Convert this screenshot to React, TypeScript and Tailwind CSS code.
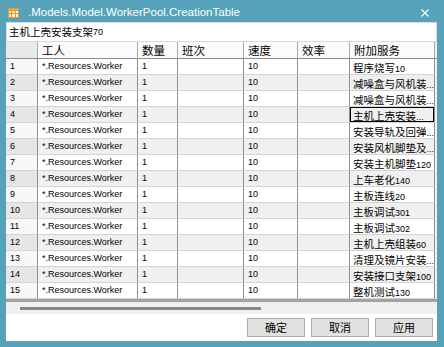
import React from "react";

const rows: [string, string][] = [
  ["1", "程序烧写10"],
  ["2", "减噪盒与风机装..."],
  ["3", "减噪盒与风机装..."],
  ["4", "主机上壳安装..."],
  ["5", "安装导轨及回弹..."],
  ["6", "安装风机脚垫及..."],
  ["7", "安装主机脚垫120"],
  ["8", "上车老化140"],
  ["9", "主板连线20"],
  ["10", "主板调试301"],
  ["11", "主板调试302"],
  ["12", "主机上壳组装60"],
  ["13", "清理及镜片安装..."],
  ["14", "安装接口支架100"],
  ["15", "整机测试130"],
];

const latin = { fontFamily: '"Liberation Sans", "Noto Sans", sans-serif' };
const cjk = { fontFamily: '"Noto Sans CJK SC", "Noto Sans", sans-serif' };

function Mixed({ text }: { text: string }) {
  const parts = text.split(/([\u3000-\u9fff\uff00-\uffef]+)/).filter((p) => p.length);
  return (
    <>
      {parts.map((p, i) =>
        /[\u3000-\u9fff\uff00-\uffef]/.test(p) ? (
          <span key={i} style={cjk} className="text-[10.5px]">
            {p}
          </span>
        ) : (
          <span key={i} style={latin} className="text-[9px]">
            {p}
          </span>
        )
      )}
    </>
  );
}

function TableIcon() {
  return (
    <svg width="11" height="10" viewBox="0 0 11 10">
      <rect x="0" y="0" width="11" height="10" fill="#e8962e" />
      <rect x="1" y="3" width="2" height="2" fill="#fde7b8" />
      <rect x="4" y="3" width="3" height="2" fill="#fff6e0" />
      <rect x="8" y="3" width="2" height="2" fill="#fff6e0" />
      <rect x="1" y="6" width="2" height="3" fill="#fde7b8" />
      <rect x="4" y="6" width="3" height="3" fill="#fff6e0" />
      <rect x="8" y="6" width="2" height="3" fill="#fff6e0" />
      <rect x="1" y="1" width="9" height="1" fill="#f6b04c" />
    </svg>
  );
}

export default function App() {
  return (
    <div className="w-[444px] h-[347px] bg-[#55a2ba] flex flex-col pl-[6px] pr-[7px] pb-[6px] overflow-hidden">
      {/* Title bar */}
      <div className="h-[22px] flex items-center relative">
        <div className="ml-[2px] mt-[3px]">
          <TableIcon />
        </div>
        <div
          style={latin}
          className="ml-[9px] mt-[4px] text-[11.5px] text-white leading-none whitespace-nowrap"
        >
          .Models.Model.WorkerPool.CreationTable
        </div>
        <div className="ml-auto mr-[8px] mt-[4px]">
          <svg width="8" height="8" viewBox="0 0 8 8">
            <path d="M0.5 0.5 L7.5 7.5 M7.5 0.5 L0.5 7.5" stroke="#ffffff" strokeWidth="1.2" />
          </svg>
        </div>
      </div>

      {/* Content */}
      <div className="flex-1 bg-white flex flex-col">
        {/* Text box */}
        <div className="h-[20px] border border-[#d9d9d9] flex items-center pl-[2px] leading-none text-black">
          <Mixed text="主机上壳安装支架70" />
        </div>

        {/* Header */}
        <div className="flex h-[17px] bg-[#fbfbfb] border-b border-[#8c8c8c] text-black">
          <div className="w-[32px] bg-[#e9e9e9] border-r border-[#a9a9a9]" />
          {[
            ["工人", "w-[100px]"],
            ["数量", "w-[40px]"],
            ["班次", "w-[66px]"],
            ["速度", "w-[54px]"],
            ["效率", "w-[52px]"],
            ["附加服务", "w-[85px]"],
          ].map(([t, w]) => (
            <div
              key={t}
              style={cjk}
              className={`${w} border-r border-[#a9a9a9] pl-[4px] text-[11.5px] leading-[16px]`}
            >
              {t}
            </div>
          ))}
          <div className="flex-1 bg-[#f0f0f0]" />
        </div>

        {/* Rows */}
        <div className="flex flex-col">
          {rows.map(([n, svc], i) => {
            const alt = i % 2 === 1;
            return (
              <div
                key={n}
                className={`flex h-[16px] text-black leading-[15px] ${alt ? "bg-[#f0f0f0]" : "bg-white"}`}
              >
                <div
                  style={latin}
                  className={`w-[32px] border-r border-b border-r-[#8f8f8f] border-b-[#d4d4d4] pl-[4px] text-[9px] ${alt ? "bg-[#e6e6e6]" : "bg-[#f7f7f7]"}`}
                >
                  {n}
                </div>
                <div
                  style={latin}
                  className="w-[100px] border-r border-b border-r-[#8f8f8f] border-b-[#d4d4d4] pl-[4px] text-[9px]"
                >
                  *.Resources.Worker
                </div>
                <div
                  style={latin}
                  className="w-[40px] border-r border-b border-r-[#8f8f8f] border-b-[#d4d4d4] pl-[4px] text-[9px]"
                >
                  1
                </div>
                <div className="w-[66px] border-r border-b border-r-[#8f8f8f] border-b-[#d4d4d4]" />
                <div
                  style={latin}
                  className="w-[54px] border-r border-b border-r-[#8f8f8f] border-b-[#d4d4d4] pl-[4px] text-[9px]"
                >
                  10
                </div>
                <div className="w-[52px] border-r border-b border-r-[#8f8f8f] border-b-[#d4d4d4]" />
                <div className="w-[85px] border-r border-b border-r-[#8f8f8f] border-b-[#d4d4d4] overflow-hidden whitespace-nowrap">
                  {n === "4" ? (
                    <div className="h-full border border-black pl-[2px] leading-[13px] whitespace-nowrap">
                      <Mixed text={svc} />
                    </div>
                  ) : (
                    <div className="pl-[3px] whitespace-nowrap">
                      <Mixed text={svc} />
                    </div>
                  )}
                </div>
                <div className="flex-1 bg-[#f0f0f0]" />
              </div>
            );
          })}
        </div>

        {/* bottom band + horizontal scrollbar */}
        <div className="h-[3px] bg-[#a3a3a3]" />
        <div className="h-[12px] bg-[#f0f0f0] flex items-center pl-[14px]">
          <div className="w-[241px] h-[3px] bg-[#878787]" />
        </div>

        {/* Buttons */}
        <div className="flex-1 flex justify-end items-start pt-[4px] pr-[4px] gap-[6px]">
          {["确定", "取消", "应用"].map((b) => (
            <div
              key={b}
              style={cjk}
              className="w-[58px] h-[19px] bg-[#e1e1e1] border border-[#adadad] flex items-center justify-center text-[11px] text-black leading-none"
            >
              {b}
            </div>
          ))}
        </div>
      </div>
    </div>
  );
}
